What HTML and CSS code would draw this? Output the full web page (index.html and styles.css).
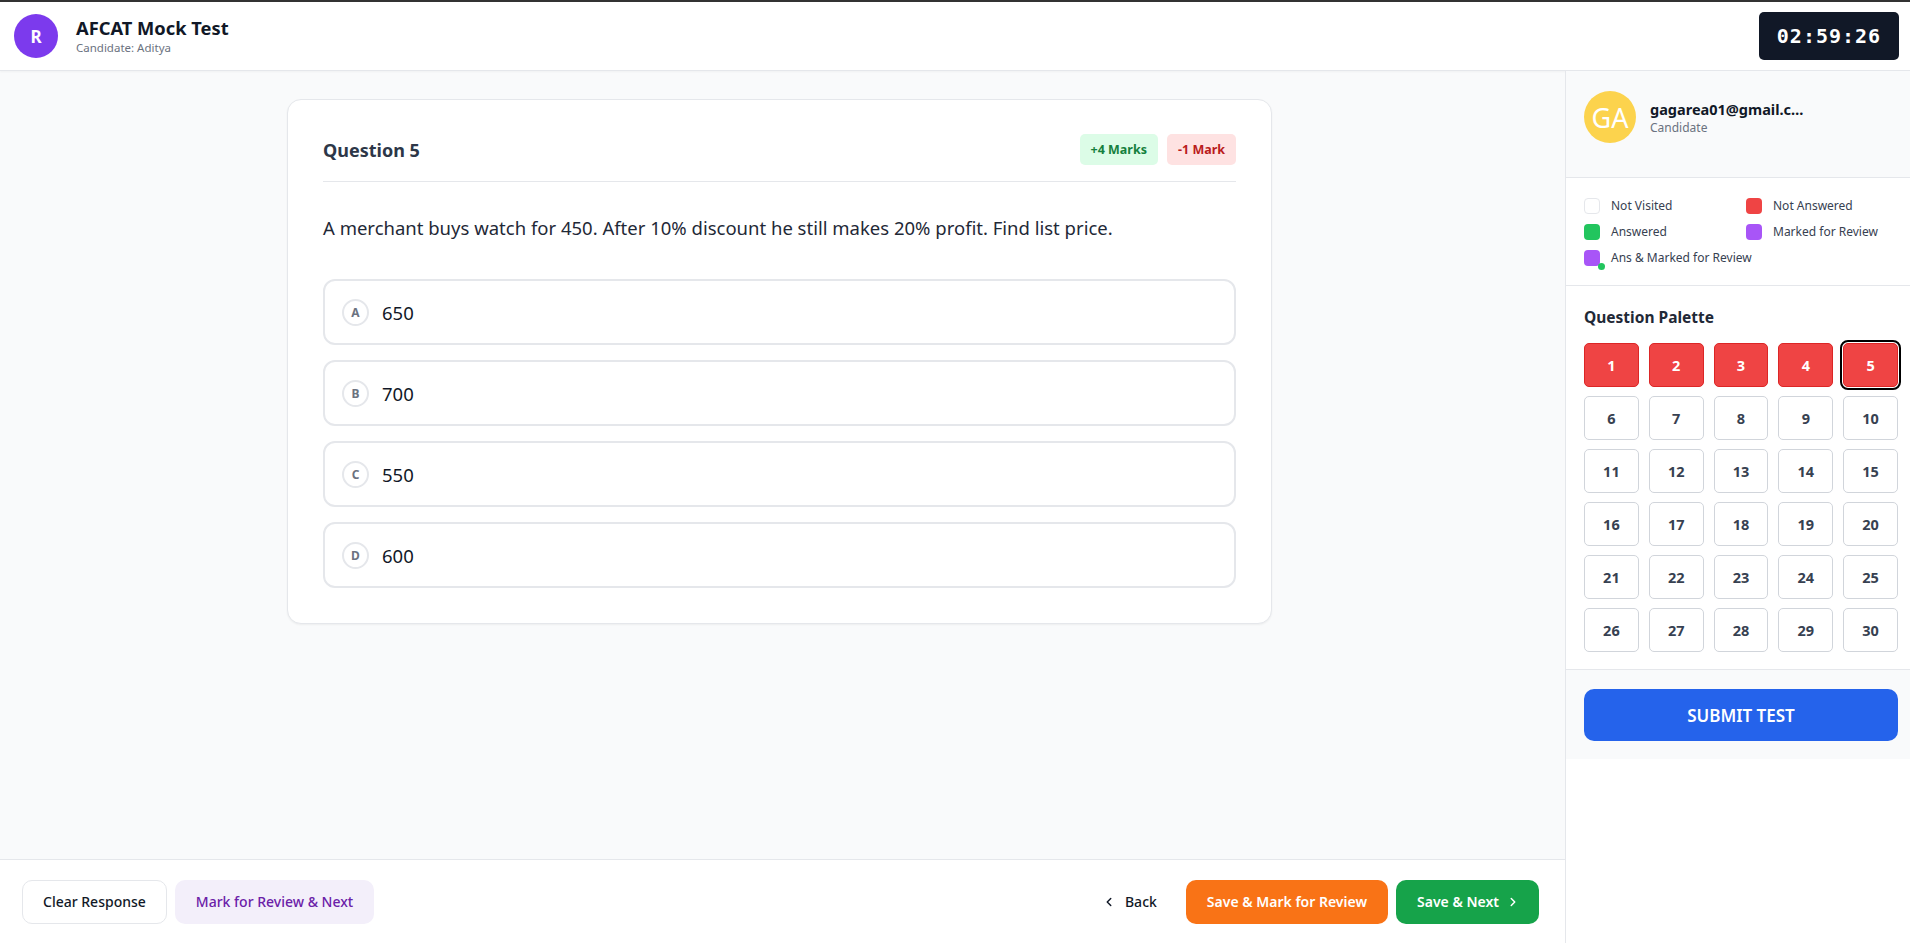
FILE: index.html
```html
<!DOCTYPE html>
<html lang="en">
<head>
  <meta charset="UTF-8">
  <title>AFCAT Mock Test</title>
  <link rel="stylesheet" href="styles.css">
</head>
<body>

  <header class="topbar">
    <div class="brand">
      <div class="brand-avatar">R</div>
      <div>
        <div class="brand-title">AFCAT Mock Test</div>
        <div class="brand-sub">Candidate: Aditya</div>
      </div>
    </div>
    <div class="timer">02:59:26</div>
  </header>

  <div class="layout">
    <main class="main">
      <div class="content">
        <div class="card">
          <div class="card-head">
            <h2 class="q-title">Question 5</h2>
            <div class="marks">
              <span class="mark mark-plus">+4 Marks</span>
              <span class="mark mark-minus">-1 Mark</span>
            </div>
          </div>

          <p class="q-text">A merchant buys watch for 450. After 10% discount he still makes 20% profit. Find list price.</p>

          <div class="options">
            <label class="option"><span class="opt-key">A</span><span class="opt-val">650</span></label>
            <label class="option"><span class="opt-key">B</span><span class="opt-val">700</span></label>
            <label class="option"><span class="opt-key">C</span><span class="opt-val">550</span></label>
            <label class="option"><span class="opt-key">D</span><span class="opt-val">600</span></label>
          </div>
        </div>
      </div>

      <div class="actions">
        <div class="actions-left">
          <button class="btn btn-clear">Clear Response</button>
          <button class="btn btn-review">Mark for Review &amp; Next</button>
        </div>
        <div class="actions-right">
          <button class="btn btn-back">
            <svg width="14" height="14" viewBox="0 0 24 24" fill="none" stroke="currentColor" stroke-width="2.5" stroke-linecap="round" stroke-linejoin="round"><path d="M15 18l-6-6 6-6"/></svg>
            Back
          </button>
          <button class="btn btn-orange">Save &amp; Mark for Review</button>
          <button class="btn btn-green">
            Save &amp; Next
            <svg width="14" height="14" viewBox="0 0 24 24" fill="none" stroke="currentColor" stroke-width="2.5" stroke-linecap="round" stroke-linejoin="round"><path d="M9 18l6-6-6-6"/></svg>
          </button>
        </div>
      </div>
    </main>

    <aside class="sidebar">
      <div class="profile">
        <div class="profile-avatar">GA</div>
        <div class="profile-info">
          <div class="profile-email">gagarea01@gmail.com</div>
          <div class="profile-role">Candidate</div>
        </div>
      </div>

      <div class="legend">
        <div class="legend-item"><span class="sq sq-none"></span>Not Visited</div>
        <div class="legend-item"><span class="sq sq-red"></span>Not Answered</div>
        <div class="legend-item"><span class="sq sq-green"></span>Answered</div>
        <div class="legend-item"><span class="sq sq-purple"></span>Marked for Review</div>
        <div class="legend-item wide"><span class="sq sq-purple sq-dot"></span>Ans &amp; Marked for Review</div>
      </div>

      <div class="palette">
        <h3 class="palette-title">Question Palette</h3>
        <div class="palette-grid" id="palette"></div>
      </div>

      <div class="submit-wrap">
        <button class="btn-submit">SUBMIT TEST</button>
      </div>
    </aside>
  </div>

  <script>
    // palette buttons 1-30, first five visited but not answered
    const palette = document.getElementById('palette');
    const current = 5;
    for (let i = 1; i <= 30; i++) {
      const b = document.createElement('button');
      b.className = 'pal-btn';
      if (i <= 5) b.classList.add('not-answered');
      if (i === current) b.classList.add('current');
      b.textContent = i;
      palette.appendChild(b);
    }
  </script>
</body>
</html>
```

FILE: styles.css
```css
* {
  box-sizing: border-box;
}

body {
  margin: 0;
  height: 100vh;
  display: flex;
  flex-direction: column;
  font-family: "Noto Sans", "Open Sans", Arial, sans-serif;
  color: #111827;
  background: #f9fafb;
  overflow: hidden;
}

button {
  font-family: inherit;
  cursor: pointer;
}

/* header */
.topbar {
  height: 71px;
  flex-shrink: 0;
  display: flex;
  align-items: center;
  justify-content: space-between;
  padding: 0 11px 0 14px;
  background: #fff;
  border-top: 2px solid #333;
  border-bottom: 1px solid #e5e7eb;
  box-shadow: 0 1px 2px rgba(0, 0, 0, 0.04);
}

.brand {
  display: flex;
  align-items: center;
  gap: 18px;
}

.brand-avatar {
  width: 44px;
  height: 44px;
  border-radius: 50%;
  background: #7c3aed;
  color: #fff;
  font-weight: 700;
  font-size: 17px;
  display: flex;
  align-items: center;
  justify-content: center;
}

.brand-title {
  font-size: 18.3px;
  font-weight: 700;
  line-height: 24px;
  color: #111827;
}

.brand-sub {
  font-size: 11.5px;
  color: #6b7280;
  line-height: 16px;
}

.timer {
  width: 140px;
  height: 48px;
  border-radius: 5px;
  background: #111827;
  color: #fff;
  font-family: "DejaVu Sans Mono", "Liberation Mono", monospace;
  font-weight: 700;
  font-size: 20px;
  letter-spacing: 1px;
  display: flex;
  align-items: center;
  justify-content: center;
}

/* layout */
.layout {
  flex: 1;
  display: flex;
  min-height: 0;
}

.main {
  flex: 1;
  display: flex;
  flex-direction: column;
  min-width: 0;
}

.content {
  flex: 1;
  overflow-y: auto;
  padding: 28px 6px 28px 0;
}

.card {
  width: 985px;
  margin: 0 auto;
  background: #fff;
  border: 1px solid #e5e7eb;
  border-radius: 14px;
  box-shadow: 0 1px 2px rgba(0, 0, 0, 0.05);
  padding: 34px 35px 35px;
}

.card-head {
  display: flex;
  align-items: center;
  justify-content: space-between;
  padding-bottom: 16px;
  border-bottom: 1px solid #e5e7eb;
}

.q-title {
  margin: 0;
  font-size: 18px;
  font-weight: 700;
  color: #2d3748;
}

.marks {
  display: flex;
  gap: 9px;
}

.mark {
  height: 31px;
  padding: 0 11px;
  border-radius: 5px;
  font-size: 12.5px;
  font-weight: 700;
  display: flex;
  align-items: center;
}

.mark-plus {
  background: #dcfce7;
  color: #15803d;
}

.mark-minus {
  background: #fee2e2;
  color: #b91c1c;
}

.q-text {
  margin: 31px 0 36px;
  font-size: 18.5px;
  line-height: 30px;
  color: #1f2937;
}

.options {
  display: flex;
  flex-direction: column;
  gap: 15px;
}

.option {
  height: 66px;
  display: flex;
  align-items: center;
  gap: 13px;
  padding: 0 17px;
  border: 2px solid #e5e7eb;
  border-radius: 12px;
  cursor: pointer;
}

.opt-key {
  width: 27px;
  height: 27px;
  border-radius: 50%;
  border: 2px solid #e5e7eb;
  font-size: 12px;
  font-weight: 700;
  color: #6b7280;
  display: flex;
  align-items: center;
  justify-content: center;
}

.opt-val {
  font-size: 18.5px;
  color: #111827;
}

/* bottom actions */
.actions {
  height: 84px;
  flex-shrink: 0;
  display: flex;
  align-items: center;
  justify-content: space-between;
  padding: 0 26px 0 22px;
  background: #fff;
  border-top: 1px solid #e5e7eb;
}

.actions-left,
.actions-right {
  display: flex;
  align-items: center;
  gap: 8px;
}

.btn {
  height: 44px;
  padding: 0 20px;
  border-radius: 10px;
  border: 1px solid transparent;
  font-size: 14px;
  font-weight: 500;
  display: flex;
  align-items: center;
  gap: 6px;
}

.btn-clear {
  background: #fff;
  border-color: #e5e7eb;
  color: #111827;
}

.btn-review {
  background: #f3effa;
  color: #6b21a8;
}

.btn-back {
  background: none;
  color: #111827;
  padding: 0 20px 0 16px;
  gap: 9px;
}

.btn-orange {
  background: #f97316;
  color: #fff;
  font-weight: 600;
}

.btn-green {
  background: #16a34a;
  color: #fff;
  font-weight: 600;
  padding: 0 18px 0 20px;
  gap: 7px;
}

/* sidebar */
.sidebar {
  width: 345px;
  flex-shrink: 0;
  background: #fff;
  border-left: 1px solid #e5e7eb;
  display: flex;
  flex-direction: column;
}

.profile {
  display: flex;
  align-items: center;
  gap: 14px;
  padding: 20px 12px 34px 18px;
  background: #f9fafb;
  border-bottom: 1px solid #e5e7eb;
}

.profile-avatar {
  width: 52px;
  height: 52px;
  border-radius: 50%;
  background: #fcd34d;
  color: #fff;
  font-size: 27px;
  display: flex;
  align-items: center;
  justify-content: center;
  flex-shrink: 0;
}

.profile-info {
  min-width: 0;
}

.profile-email {
  max-width: 155px;
  font-size: 14.5px;
  line-height: 20px;
  font-weight: 700;
  color: #111827;
  white-space: nowrap;
  overflow: hidden;
  text-overflow: ellipsis;
}

.profile-role {
  font-size: 12px;
  line-height: 17px;
  color: #6b7280;
}

.legend {
  display: grid;
  grid-template-columns: 1fr 1fr;
  column-gap: 10px;
  row-gap: 10px;
  padding: 20px 12px 19px 18px;
  border-bottom: 1px solid #e5e7eb;
}

.legend-item {
  display: flex;
  align-items: center;
  gap: 11px;
  font-size: 12px;
  line-height: 16px;
  color: #374151;
}

.legend-item.wide {
  grid-column: span 2;
}

.sq {
  position: relative;
  width: 16px;
  height: 16px;
  border-radius: 4px;
  flex-shrink: 0;
}

.sq-none {
  background: #fff;
  border: 1px solid #e5e7eb;
}

.sq-red {
  background: #ef4444;
}

.sq-green {
  background: #22c55e;
}

.sq-purple {
  background: #a855f7;
}

.sq-dot::after {
  content: "";
  position: absolute;
  right: -5px;
  bottom: -4px;
  width: 7px;
  height: 7px;
  border-radius: 50%;
  background: #22c55e;
}

.palette {
  padding: 20px 12px 17px 18px;
  border-bottom: 1px solid #e5e7eb;
}

.palette-title {
  margin: 0 0 15px;
  font-size: 15.5px;
  font-weight: 700;
  line-height: 22px;
  color: #1f2937;
}

.palette-grid {
  display: grid;
  grid-template-columns: repeat(5, 1fr);
  column-gap: 10px;
  row-gap: 9px;
}

.pal-btn {
  height: 44px;
  background: #fff;
  border: 1px solid #d1d5db;
  border-radius: 5px;
  font-size: 14.5px;
  font-weight: 700;
  color: #374151;
}

.pal-btn.not-answered {
  background: #ef4444;
  border-color: #dc2626;
  color: #fff;
}

.pal-btn.current {
  outline: 2px solid #000;
  outline-offset: 1px;
}

.submit-wrap {
  padding: 19px 12px 18px 18px;
  background: #f9fafb;
}

.btn-submit {
  width: 100%;
  height: 52px;
  border: none;
  border-radius: 10px;
  background: #2563eb;
  color: #fff;
  font-size: 17px;
  font-weight: 600;
}
```
